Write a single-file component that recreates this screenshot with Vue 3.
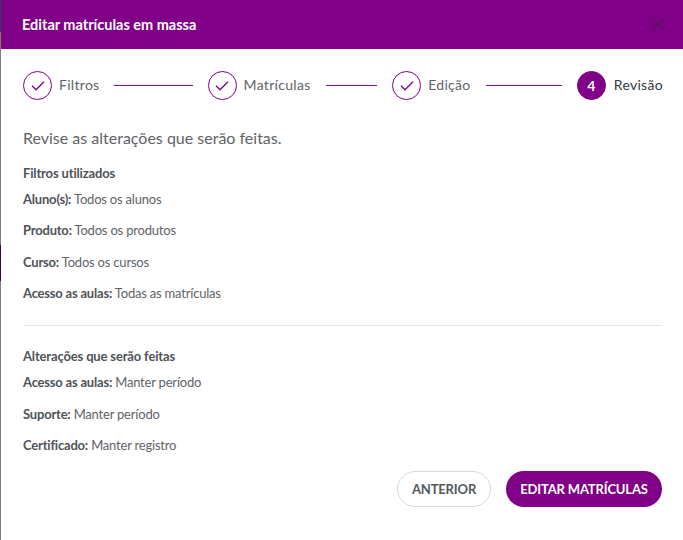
<template>
  <div class="backdrop">
    <div class="modal">
      <header class="modal-header">
        <h1>Editar matrículas em massa</h1>
        <button class="close" aria-label="Fechar">
          <svg width="11" height="11" viewBox="0 0 11 11">
            <path d="M0.5 0.5L10.5 10.5M10.5 0.5L0.5 10.5" stroke="#4a1a58" stroke-width="1.1" fill="none" />
          </svg>
        </button>
      </header>

      <div class="stepper">
        <div
          v-for="(step, index) in steps"
          :key="step"
          class="step"
          :class="{ current: index === steps.length - 1 }"
        >
          <span class="circle">
            <template v-if="index === steps.length - 1">{{ index + 1 }}</template>
            <svg v-else width="14" height="10" viewBox="0 0 14 10">
              <path d="M1 4.8L5 8.8L13 0.8" stroke="#800087" stroke-width="1.3" fill="none" />
            </svg>
          </span>
          <span class="label">{{ step }}</span>
          <span v-if="index < steps.length - 1" class="line"></span>
        </div>
      </div>

      <p class="intro">Revise as alterações que serão feitas.</p>

      <section class="group">
        <h2>Filtros utilizados</h2>
        <p v-for="item in filters" :key="item.name" class="row">
          <strong>{{ item.name }}:</strong> {{ item.value }}
        </p>
      </section>

      <hr class="divider" />

      <section class="group">
        <h2>Alterações que serão feitas</h2>
        <p v-for="item in changes" :key="item.name" class="row">
          <strong>{{ item.name }}:</strong> {{ item.value }}
        </p>
      </section>

      <footer class="actions">
        <button class="btn outline">ANTERIOR</button>
        <button class="btn primary">EDITAR MATRÍCULAS</button>
      </footer>
    </div>
  </div>
</template>

<script setup>
const steps = ["Filtros", "Matrículas", "Edição", "Revisão"];

const filters = [
  { name: "Aluno(s)", value: "Todos os alunos" },
  { name: "Produto", value: "Todos os produtos" },
  { name: "Curso", value: "Todos os cursos" },
  { name: "Acesso as aulas", value: "Todas as matrículas" },
];

const changes = [
  { name: "Acesso as aulas", value: "Manter período" },
  { name: "Suporte", value: "Manter período" },
  { name: "Certificado", value: "Manter registro" },
];
</script>

<style>
body {
  background: #7f7f7f;
}
</style>

<style scoped>
.backdrop {
  height: 540px;
  padding-left: 1px;
  overflow: hidden;
  font-family: Lato, "Liberation Sans", sans-serif;
  color: #55595e;
  /* pagina de tras aparecendo na borda esquerda */
  background: linear-gradient(
    to bottom,
    #16505a 0 32px,
    #7f7f60 32px 49px,
    #7f7f7f 49px 245px,
    #40004a 245px 281px,
    #7f7f7f 281px
  );
}

.modal {
  height: 540px;
  background: #fff;
}

.modal-header {
  height: 49px;
  padding: 0 19px 0 21px;
  display: flex;
  align-items: center;
  justify-content: space-between;
  background: #800087;
}

.modal-header h1 {
  margin: 0;
  font-size: 14.5px;
  font-weight: 700;
  color: #fff;
}

.close {
  padding: 0;
  border: none;
  background: none;
  line-height: 0;
}

.stepper {
  margin-top: 22px;
  padding: 0 20px 0 22px;
  display: flex;
  align-items: center;
}

.step {
  flex: 1;
  display: flex;
  align-items: center;
  gap: 7px;
}

.step.current {
  flex: none;
  gap: 8px;
}

.circle {
  width: 29px;
  height: 29px;
  box-sizing: border-box;
  border: 1px solid #800087;
  border-radius: 50%;
  display: flex;
  align-items: center;
  justify-content: center;
  font-size: 14px;
  font-weight: 700;
}

.current .circle {
  background: #800087;
  color: #fff;
}

.label {
  margin-bottom: 2px;
  font-size: 14px;
  letter-spacing: 0.3px;
  color: #5f6368;
}

.current .label {
  color: #333a40;
}

.line {
  flex: 1;
  height: 1px;
  margin: 0 15px 0 8px;
  background: #8a0a91;
}

.intro {
  margin: 28px 22px 0;
  font-size: 16px;
  line-height: 20px;
  color: #5f6368;
}

.group {
  margin: 0 21px 0 22px;
}

.group:first-of-type {
  margin-top: 16px;
}

.group h2 {
  margin: 0;
  font-size: 13px;
  line-height: 18px;
  font-weight: 700;
  letter-spacing: -0.15px;
  color: #4f5358;
}

.row {
  margin: 0;
  font-size: 13px;
  line-height: 18px;
  letter-spacing: -0.2px;
  color: #5f6368;
}

.row + .row {
  margin-top: 13.4px;
}

.group h2 + .row {
  margin-top: 8px;
}

.row strong {
  font-weight: 700;
  color: #4f5358;
}

.divider {
  margin: 23px 21px 21px 22px;
  border: none;
  border-top: 1px solid #e6e6e6;
}

.actions {
  margin: 17px 21px 0 0;
  display: flex;
  justify-content: flex-end;
  gap: 15px;
}

.btn {
  height: 36px;
  border-radius: 18px;
  font-family: inherit;
  font-size: 13px;
  font-weight: 700;
  letter-spacing: -0.15px;
}

.outline {
  width: 94px;
  background: #fff;
  border: 1px solid #d9d9d9;
  color: #55595e;
}

.primary {
  width: 156px;
  background: #800087;
  border: none;
  color: #fff;
}
</style>
